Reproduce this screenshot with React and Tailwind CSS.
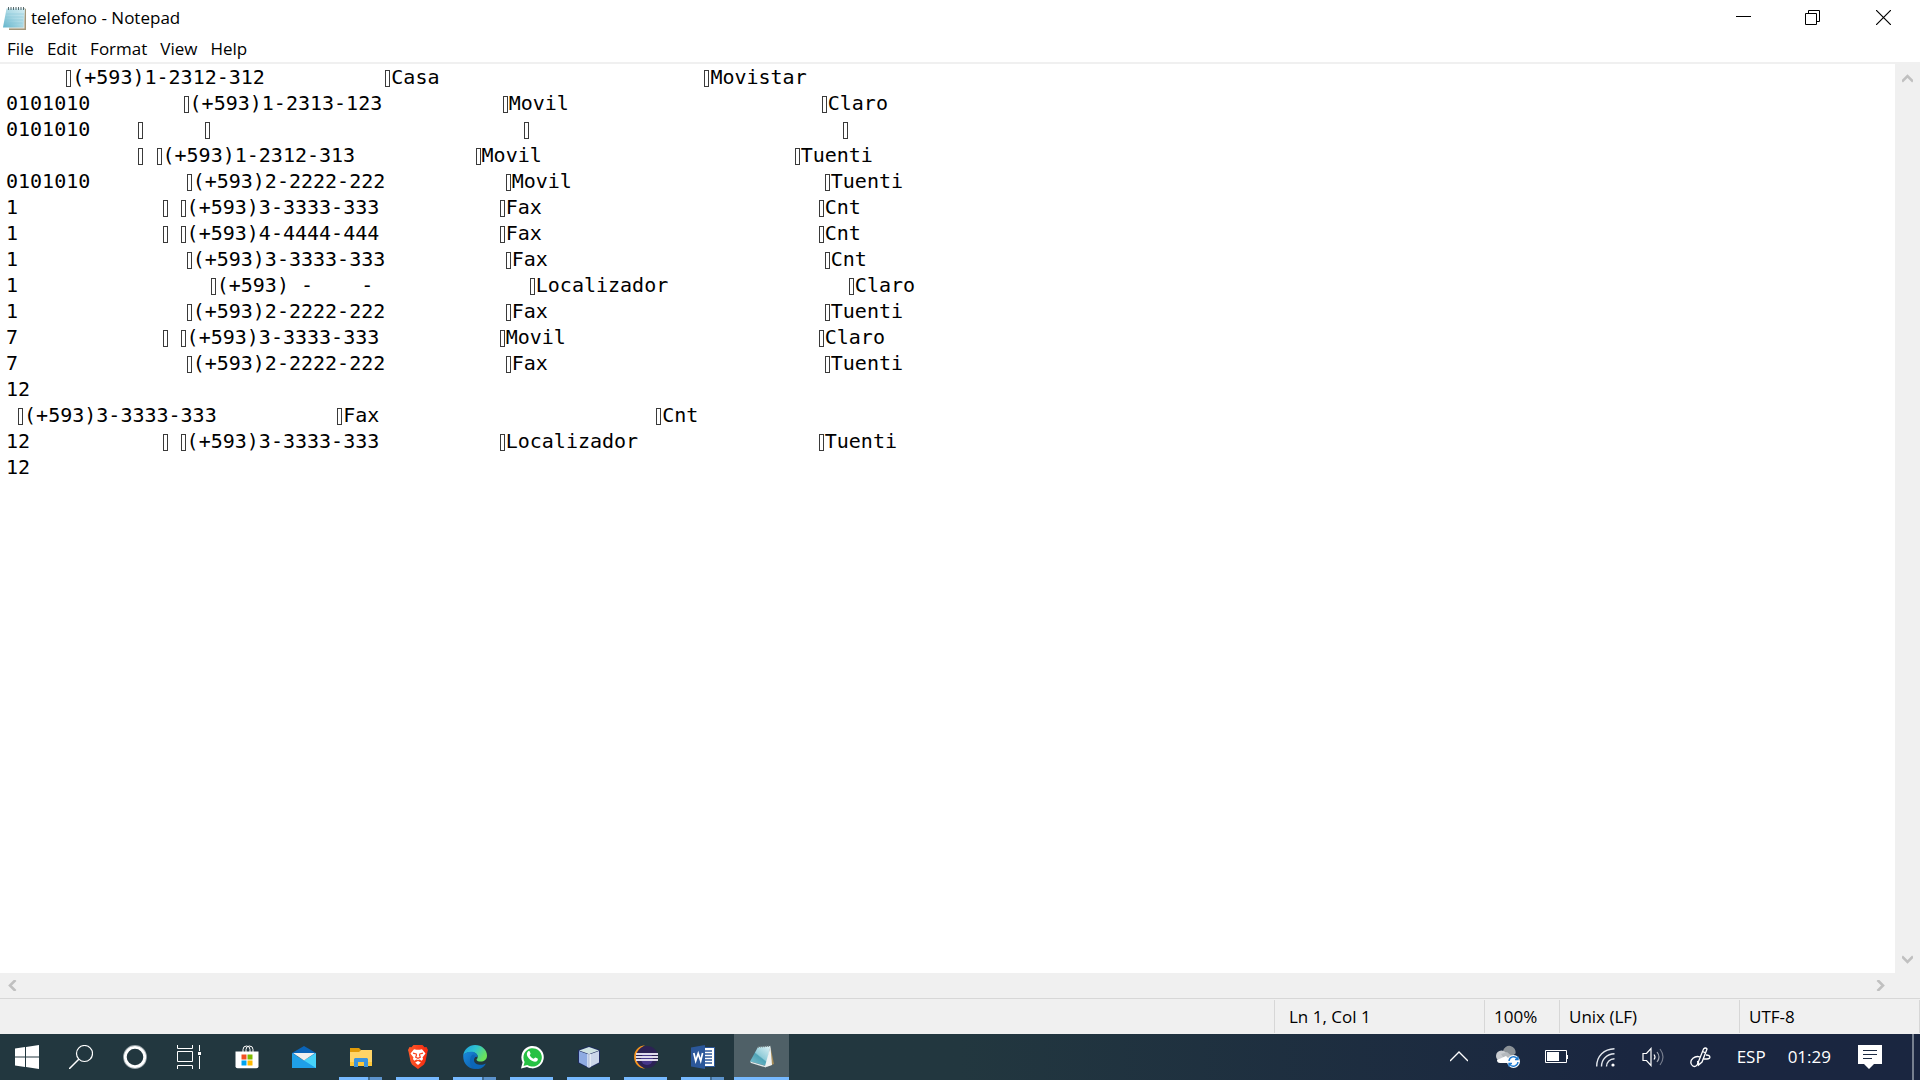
import React from "react";

const sp = (n) => " ".repeat(n);

/* Control character glyph: a narrow hollow box */
const Box = () => (
  <span className="inline-block w-[6px] pr-px align-[-3px]">
    <span className="block h-[17px] border border-[#3a3a3a]" />
  </span>
);

/* "|" stands for a control character, "~" for a narrow blank one */
const lines = [
  sp(5) + "|(+593)1-2312-312" + sp(10) + "|Casa" + sp(22) + "|Movistar",
  "0101010" + sp(7) + "~|(+593)1-2313-123" + sp(10) + "|Movil" + sp(21) + "|Claro",
  "0101010" + sp(4) + "|" + sp(5) + "|" + sp(26) + "|" + sp(26) + "|",
  sp(11) + "| |(+593)1-2312-313" + sp(10) + "|Movil" + sp(21) + "|Tuenti",
  "0101010" + sp(8) + "|(+593)2-2222-222" + sp(10) + "|Movil" + sp(21) + "|Tuenti",
  "1" + sp(12) + "| |(+593)3-3333-333" + sp(10) + "|Fax" + sp(23) + "|Cnt",
  "1" + sp(12) + "| |(+593)4-4444-444" + sp(10) + "|Fax" + sp(23) + "|Cnt",
  "1" + sp(14) + "|(+593)3-3333-333" + sp(10) + "|Fax" + sp(23) + "|Cnt",
  "1" + sp(16) + "|(+593) -" + sp(4) + "-" + sp(13) + "|Localizador" + sp(15) + "|Claro",
  "1" + sp(14) + "|(+593)2-2222-222" + sp(10) + "|Fax" + sp(23) + "|Tuenti",
  "7" + sp(12) + "| |(+593)3-3333-333" + sp(10) + "|Movil" + sp(21) + "|Claro",
  "7" + sp(14) + "|(+593)2-2222-222" + sp(10) + "|Fax" + sp(23) + "|Tuenti",
  "12",
  sp(1) + "|(+593)3-3333-333" + sp(10) + "|Fax" + sp(23) + "|Cnt",
  "12" + sp(11) + "| |(+593)3-3333-333" + sp(10) + "|Localizador" + sp(15) + "|Tuenti",
  "12",
];

function Line({ text }) {
  return (
    <div className="h-[26px]">
      {text.split(/([|~])/).map((part, i) => {
        if (part === "|") return <Box key={i} />;
        if (part === "~") return <span key={i} className="inline-block w-[9px]" />;
        return <span key={i}>{part}</span>;
      })}
    </div>
  );
}

const Svg = ({ children, size = 24, ...rest }) => (
  <svg width={size} height={size} viewBox="0 0 24 24" fill="none" aria-hidden="true" {...rest}>
    {children}
  </svg>
);

const NotepadFile = () => (
  <Svg>
    <defs>
      <linearGradient id="pad" x1="1" y1="0" x2="0" y2="1">
        <stop offset="0" stopColor="#d3edf3" />
        <stop offset=".5" stopColor="#a9d8e4" />
        <stop offset="1" stopColor="#62b4cb" />
      </linearGradient>
    </defs>
    <path d="M6 21.500V24h17V3l-2-1z" fill="#a3967a" />
    <path d="M6 21v1.500h15.500V3z" fill="#e9e6dc" />
    <path d="M3.500 2.500H22L20.500 21.500H0z" fill="url(#pad)" />
    <path d="M3 8h18M2.500 11h18M2 14h18M1.500 17h18" stroke="#83c3d4" strokeWidth=".5" />
    <path d="M5.500 1v3M8 1v3M10.500 1v3M13 1v3M15.500 1v3M18 1v3M20.500 1v3" stroke="#55686c" />
  </Svg>
);

const Windows = () => (
  <Svg>
    <path fill="#fff" d="M0 3.400 10 2v9.500H0zM11 1.900 24 0v11.500H11zM0 12.500h10V22L0 20.600zM11 12.500h13V24l-13-1.900z" />
  </Svg>
);
const Search = () => (
  <Svg stroke="#fff" strokeWidth="1.200">
    <circle cx="15.500" cy="8.500" r="8" />
    <path d="M9.800 14.200 0 24" strokeWidth="1.500" />
  </Svg>
);
const Cortana = () => (
  <Svg>
    <circle cx="12" cy="12" r="11.300" stroke="#9aa6ab" strokeWidth="1.200" />
    <circle cx="12" cy="12" r="9.700" stroke="#fff" strokeWidth="2.800" />
  </Svg>
);
const TaskView = () => (
  <Svg stroke="#fff">
    <path d="M.5 0v3.500h15V0M.5 6.500h15v10H.5zM.5 24v-3.500h15V24M22.500 0v6M22.500 11v13" />
    <path d="M21 7h3v3h-3z" fill="#fff" stroke="none" />
  </Svg>
);
const Store = () => (
  <Svg>
    <path d="M8 7V4.500a3.500 3.500 0 0 1 7 0V7M11 7V4.500a3.500 3.500 0 0 1 7 0V7" stroke="#fff" />
    <path d="M.5 6.500h23v14.800a2 2 0 0 1-2 2h-19a2 2 0 0 1-2-2z" fill="#fff" />
    <path d="M6.500 9.500h5v5h-5z" fill="#f25022" />
    <path d="M12.500 9.500h5v5h-5z" fill="#7fba00" />
    <path d="M6.500 15.500h5v5h-5z" fill="#00a4ef" />
    <path d="M12.500 15.500h5v5h-5z" fill="#ffb900" />
  </Svg>
);
const Mail = () => (
  <Svg>
    <path d="M0 8 12 1l12 7v3H0z" fill="#0a64b8" />
    <path d="M0 8l12 7.500L24 8v15H0z" fill="#1f9fe8" />
    <path d="M24 8 12 15.500 24 23z" fill="#47d2f8" />
    <path d="M1 8h22l-11 7.500z" fill="#efefef" />
  </Svg>
);
const Explorer = () => (
  <Svg>
    <path d="M1 3h9l2 2-2 3H1z" fill="#e19b08" />
    <path d="M1 7h9l2-2h11v16H1z" fill="#ffd467" />
    <path d="M1 17h22v4H1z" fill="#fdc739" />
    <path d="M5 22v-8l1-1h12l1 1v8h-4v-5H9v5z" fill="#3b93dd" />
  </Svg>
);
const Brave = () => (
  <Svg>
    <defs>
      <linearGradient id="shield" x1="0" y1="0" x2="1" y2="0">
        <stop offset="0" stopColor="#ff5a2a" />
        <stop offset="1" stopColor="#f4290f" />
      </linearGradient>
    </defs>
    <path d="M7.500 0h9l2 2.200 2-.2L22 5l-.6 2-1.900 9.500L18 19.500 12 24l-6-4.500-1.500-3L2.600 7 2 5l1.500-3 2 .2z" fill="url(#shield)" />
    <path d="M8 4.200l2.500.6h3l2.500-.6 3.500 4.300-3 4 .6 1.500-1.400 1.700-2.200-1.200-1.500.6-1.500-.6-2.200 1.200L6.900 14l.6-1.500-3-4z" fill="#fff" />
    <path d="M9.200 17.500 12 16l2.800 1.500L12 20z" fill="#fff" />
    <path d="M7 8.200l3.200.8.300.9-.8 2.300L12 13.300l2.300-1.100-.8-2.300.3-.9 3.200-.8" stroke="#fb4420" strokeWidth="1.200" />
  </Svg>
);
const Edge = () => (
  <Svg>
    <defs>
      <linearGradient id="edgeTop" x1="0" y1="0" x2="1" y2=".5">
        <stop offset="0" stopColor="#1c9de0" />
        <stop offset=".5" stopColor="#2fc2d0" />
        <stop offset="1" stopColor="#6be35a" />
      </linearGradient>
      <linearGradient id="edgeLow" x1="0" y1="0" x2="1" y2="1">
        <stop offset="0" stopColor="#1a8ade" />
        <stop offset="1" stopColor="#0b59a4" />
      </linearGradient>
    </defs>
    <path d="M.2 10.500C1 4.500 6 0 12 0c7 0 12 5 12 10.500 0 4-3 6-6.200 6-2.800 0-4.300-1-4.300-1.800 0-.6 1.200-1 1.200-3C14.700 9 11.500 7 8 7 4.500 7 1.500 8.500.2 10.500z" fill="url(#edgeTop)" />
    <path d="M.2 10.500C1.500 8 4.600 6.800 8 6.800c3.800 0 6.700 2 6.700 5l-3 .2C9 12 8.500 22 15 24 7 25 0 20 .2 10.500z" fill="url(#edgeLow)" />
    <path d="M10 9.500C6 11 4.500 23.500 15 24c4 0 7-3 7.700-5.400-4 2.400-11.700 1.400-11.700-3.600 0-1.500.8-2.500 1.500-3-.3-1.500-1.300-2.300-2.500-2.500z" fill="#0c66b8" />
  </Svg>
);
const WhatsApp = () => (
  <Svg>
    <path d="M1 23.500 2.600 17.300A11.200 11.200 0 1 1 7 21.900z" fill="#fff" />
    <path d="M3.500 21 4.600 16.900A9.200 9.200 0 1 1 7.300 19.900z" fill="#26c143" />
    <path d="M8.200 6.300c.5-.5 1.300-.4 1.500.1l.9 2.100c.1.600-.9 1.400-.8 1.700.9 1.700 2.200 2.900 3.900 3.600.5.100 1.200-1.400 1.800-1.200l2.100 1c.5.300.3 2-.7 2.600-1.300.8-2.800.6-5-.5-2.300-1.200-4.400-3.700-4.900-5.500-.4-1.600.2-3 1.200-3.900z" fill="#fff" />
  </Svg>
);
const NetBeans = () => (
  <Svg>
    <path d="M12 1 23 5v13l-11 5.500L1 18V5z" fill="#1d2a5e" />
    <path d="M12 2 22 5.500 12 9 2 5.500z" fill="#cfe3e2" />
    <path d="M2 6l9.700 3.500V22.500L2 17.500z" fill="#8fabe2" />
    <path d="M22 6l-9.700 3.500V22.500l9.700-5z" fill="#cbd6ea" />
    <path d="M10 9l2-1 2 1v13l-2 1-2-1z" fill="#f1f6fb" opacity=".6" />
  </Svg>
);
const Eclipse = () => (
  <Svg>
    <path d="M11 .3C-3.500 1.500-3.500 22.500 11 23.700 2 19.500 2 4.500 11 .3z" fill="#f7941e" />
    <circle cx="13" cy="12" r="11" fill="#2c2255" />
    <circle cx="13" cy="14" r="6" fill="#473788" />
    <path d="M2 9h22M1.800 12h22.200M2 15h22" stroke="#e0dcec" strokeWidth="2" />
  </Svg>
);
const Word = () => (
  <Svg>
    <path d="M12 2.500h11.500v19H12z" fill="#fff" stroke="#2b579a" />
    <path d="M14 6h7M14 9h7M14 12h7M14 15h7M14 18h7" stroke="#2b579a" strokeWidth="1.300" />
    <path d="M0 2.500 14 0v24L0 21.500z" fill="#2b579a" />
    <path d="M2.800 8l1.900 8L7.200 8.500 9.700 16 11.600 8" stroke="#fff" strokeWidth="1.700" />
  </Svg>
);
const NotepadApp = () => (
  <Svg>
    <defs>
      <linearGradient id="glass" x1=".9" y1="0" x2=".1" y2="1">
        <stop offset="0" stopColor="#d9eff3" />
        <stop offset=".5" stopColor="#8fcbd8" />
        <stop offset=".55" stopColor="#4fa3b6" />
        <stop offset="1" stopColor="#7cc0cf" />
      </linearGradient>
    </defs>
    <path d="M20.500 2 24 19l-5 2z" fill="#a58b56" />
    <path d="M8 2 20.500 1l-4 20L0 16.500z" fill="url(#glass)" />
    <path d="M20.500 1.500 22 20l-5.500 2-1.500-1z" fill="#eef1f1" />
    <path d="M0 16.500 16 21v1.500L1 18z" fill="#e4eced" />
    <path d="M8 2l12.500-1" stroke="#6f7b7e" strokeWidth="1.500" strokeDasharray="1 1" />
  </Svg>
);

const apps = [
  { name: "Microsoft Store", Icon: Store },
  { name: "Mail", Icon: Mail },
  { name: "File Explorer", Icon: Explorer, run: "stack" },
  { name: "Brave", Icon: Brave, run: "one" },
  { name: "Microsoft Edge", Icon: Edge, run: "stack" },
  { name: "WhatsApp", Icon: WhatsApp, run: "one" },
  { name: "NetBeans", Icon: NetBeans, run: "one" },
  { name: "Eclipse", Icon: Eclipse, run: "one" },
  { name: "Word", Icon: Word, run: "stack" },
];

function SystemButton({ name, Icon }) {
  return (
    <button aria-label={name} className="flex h-full w-[54px] items-center justify-center">
      <Icon />
    </button>
  );
}

function AppButton({ name, Icon, run }) {
  return (
    <button aria-label={name} className="flex h-full w-[57px] flex-col items-center">
      <span className="flex flex-1 items-center pt-[3px]"><Icon /></span>
      <span className="flex h-[3px] w-[43px]">
        {run && <span className="flex-1 bg-[#76b9ff]" />}
        {run === "stack" && <span className="w-[2px] bg-[#416c92]" />}
        {run === "stack" && <span className="w-3 bg-[#5c93cc]" />}
      </span>
    </button>
  );
}

const Chevron = ({ d }) => (
  <svg width="11" height="11" viewBox="0 0 11 11" fill="none" stroke="#c0c0c0" strokeWidth="2.600" aria-hidden="true">
    <path d={d} />
  </svg>
);

export default function App() {
  return (
    <div className="flex h-screen flex-col overflow-hidden bg-white font-['Open_Sans','Noto_Sans',sans-serif] text-black">
      <header className="flex h-[35px] shrink-0 items-center">
        <div className="ml-[3px]"><NotepadFile /></div>
        <h1 className="ml-1 flex-1 text-[17px] leading-6">telefono - Notepad</h1>
        <button aria-label="Minimize" className="flex h-full w-[69px] items-center justify-center">
          <svg width="15" height="15" stroke="#000"><path d="M0 6.500h15" /></svg>
        </button>
        <button aria-label="Restore" className="flex h-full w-[69px] items-center justify-center">
          <svg width="15" height="15" stroke="#000" fill="none"><path d="M.5 3.500h11v11H.5zM3.500 3.500v-3h11v11h-3" /></svg>
        </button>
        <button aria-label="Close" className="flex h-full w-[73px] items-center justify-center">
          <svg width="15" height="15" stroke="#000" strokeWidth="1.200"><path d="M0 0l15 15M15 0L0 15" /></svg>
        </button>
      </header>

      <nav className="flex h-[29px] shrink-0 items-center gap-[13px] border-b-2 border-[#f0f0f0] pl-[7px] pt-px text-[17px] leading-6">
        {["File", "Edit", "Format", "View", "Help"].map((m) => (
          <button key={m}>{m}</button>
        ))}
      </nav>

      <main className="flex min-h-0 flex-1">
        <div
          role="textbox"
          aria-multiline="true"
          aria-label="Document text"
          tabIndex={0}
          className="min-w-0 flex-1 overflow-hidden whitespace-pre pl-[6px] font-['DejaVu_Sans_Mono',monospace] text-[20px] leading-[26px] outline-none"
        >
          {lines.map((l, i) => <Line key={i} text={l} />)}
        </div>
        <div className="flex w-[25px] shrink-0 flex-col items-center justify-between bg-[#f0f0f0] pt-[9px] pb-2">
          <button aria-label="Scroll up"><Chevron d="M0 8.500 5.500 3 11 8.500" /></button>
          <button aria-label="Scroll down"><Chevron d="M0 2.500 5.500 8 11 2.500" /></button>
        </div>
      </main>

      <div className="flex h-[25px] shrink-0 items-center justify-between bg-[#f0f0f0] pr-[34px] pl-[7px]">
        <button aria-label="Scroll left"><Chevron d="M8.500 0 3 5.500 8.500 11" /></button>
        <button aria-label="Scroll right"><Chevron d="M2.500 0 8 5.500 2.500 11" /></button>
      </div>

      <footer className="flex h-[36px] shrink-0 border-t border-[#d7d7d7] bg-[#f0f0f0] pt-px pb-px text-[17px] leading-[34px]">
        <div className="flex-1" />
        <div className="w-[210px] border-l border-[#d7d7d7] pl-[14px]">Ln 1, Col 1</div>
        <div className="w-[75px] border-l border-[#d7d7d7] pl-[9px]">100%</div>
        <div className="w-[180px] border-l border-[#d7d7d7] pl-[9px]">Unix (LF)</div>
        <div className="w-[181px] border-x border-[#d7d7d7] pl-[9px]">UTF-8</div>
      </footer>

      <div className="flex h-[46px] shrink-0 items-center bg-linear-to-r from-[#22373f] from-50% to-[#1a2640] to-85% text-white">
        <SystemButton name="Start" Icon={Windows} />
        <SystemButton name="Search" Icon={Search} />
        <SystemButton name="Cortana" Icon={Cortana} />
        <SystemButton name="Task View" Icon={TaskView} />
        <div className="ml-[2px] flex h-full">
          {apps.map((a) => <AppButton key={a.name} {...a} />)}
        </div>
        <button aria-label="Notepad" className="ml-[3px] flex h-full w-[55px] flex-col items-center bg-[#4f6067]">
          <span className="flex flex-1 items-center pt-[3px]"><NotepadApp /></span>
          <span className="h-[3px] w-full bg-[#76b9ff]" />
        </button>

        <div className="ml-auto flex h-full items-center text-[17px] leading-6">
          <button aria-label="Show hidden icons" className="mr-7">
            <svg width="18" height="18" viewBox="0 0 18 18" fill="none" stroke="#fff" strokeWidth="1.400"><path d="M0 13 9 4l9 9" /></svg>
          </button>
          <button aria-label="OneDrive" className="mr-[25px]">
            <Svg>
              <path d="M7 6a6 6 0 0 1 12.500 2.500L14 13z" fill="#8c9297" />
              <circle cx="5.500" cy="11" r="5.500" fill="#c9ccd0" />
              <path d="M5 9l6-2 6 5-8 3z" fill="#b5b9bd" />
              <path d="M1 15l9-4 7 7H4a3 3 0 0 1-3-3z" fill="#fff" />
              <circle cx="17.500" cy="16.500" r="6.500" fill="#fff" />
              <path d="M13 16a4.600 4.600 0 0 1 8.500-2M22 17a4.600 4.600 0 0 1-8.500 2M22 11.500V14.500h-3M13 21.500V18.500h3" stroke="#1b78cf" strokeWidth="1.400" />
            </Svg>
          </button>
          <button aria-label="Battery" className="mr-[28px]">
            <svg width="23" height="14" viewBox="0 0 23 14" fill="none"><path d="M.5.5h21v12H.5z" stroke="#fff" /><path d="M2 2h12v9H2zM22 5h1v4h-1z" fill="#fff" /></svg>
          </button>
          <button aria-label="Network" className="mr-[27px]">
            <svg width="19" height="19" viewBox="0 0 19 19" fill="none" stroke="#e4e8ee" strokeWidth="1.400">
              <path d="M.7 18.500C.7 8 8 1 18.500.7M5.500 18.500C5.500 11 11 6 18.500 5.800M10.500 18.500c0-4.500 3.500-7.600 8-7.700" />
              <circle cx="17" cy="17" r="1.600" fill="#fff" stroke="none" />
            </svg>
          </button>
          <button aria-label="Volume" className="mr-[25px]">
            <svg width="23" height="20" viewBox="0 0 23 20" fill="none" stroke="#fff" strokeWidth="1.200">
              <path d="M1 6.500h3.500L9 1.500v17L4.500 13.500H1z" />
              <path d="M12 7.500q2 2.500 0 5" />
              <path d="M15 5q4 5 0 10" opacity=".6" />
              <path d="M18 2q6 8 0 16" opacity=".4" />
            </svg>
          </button>
          <button aria-label="Windows Ink" className="mr-[26px]">
            <svg width="21" height="21" viewBox="0 0 21 21" fill="none" stroke="#fff" strokeWidth="1.300">
              <path d="M8.500 14.500 13.500 2q2-2 3.500 0L12 15l-3.500 3zM12.500 4.500l3.500 1.500" />
              <path d="M10 10C5 8-1 13 1.500 17.500c2.500 4 7.500 1 6-3.500M16 8c5 0 5 4 1 4h-3.500" />
            </svg>
          </button>
          <button className="mr-[22px]">ESP</button>
          <button className="mr-[27px]">01:29</button>
          <button aria-label="Notifications" className="mr-[30px]">
            <svg width="24" height="24" viewBox="0 0 24 24"><path d="M0 0h24v19h-8l-5 5-5-5H0z" fill="#fff" /><path d="M5 5.500h14M5 9.500h14M5 13.500h9" stroke="#1b2a42" /></svg>
          </button>
          <button aria-label="Show desktop" className="h-full w-2 border-l-2 border-[#76808f]" />
        </div>
      </div>
    </div>
  );
}
